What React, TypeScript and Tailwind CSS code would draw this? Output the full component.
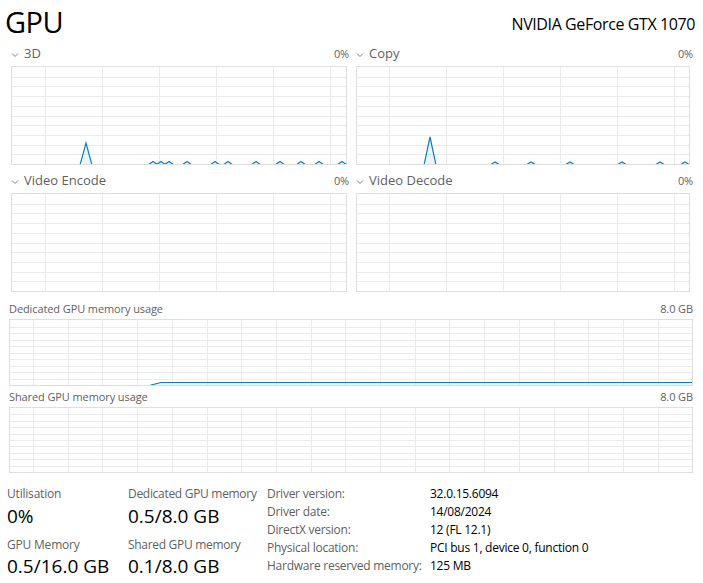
import React from "react";

const LINE = "#117dbb";
const GRID = "#ebebeb";

type Pt = [number, number];

function bumps(xs: number[], base: number, h = 2.5): Pt[] {
  const pts: Pt[] = [];
  xs.forEach((x) => {
    pts.push([x - 5, base], [x, base - h], [x + 5, base]);
  });
  return pts;
}

function Chart({
  w,
  h,
  cols,
  colStart,
  colStep,
  rows,
  series,
}: {
  w: number;
  h: number;
  cols: number;
  colStart: number;
  colStep: number;
  rows: number;
  series?: Pt[];
}) {
  const vx: number[] = [];
  for (let i = 0; i < cols; i++) vx.push(Math.round(colStart + i * colStep) + 0.5);
  const hy: number[] = [];
  for (let i = 1; i < rows; i++) hy.push(Math.round((i * h) / rows) + 0.5);
  const path = series ? series.map((p) => p.join(",")).join(" ") : "";
  return (
    <div className="border border-[#dedede] bg-white" style={{ width: w + 2, height: h + 2 }}>
      <svg width={w} height={h} className="block">
        {vx.map((x) => (
          <line key={"v" + x} x1={x} x2={x} y1={0} y2={h} stroke={GRID} strokeWidth={1} />
        ))}
        {hy.map((y) => (
          <line key={"h" + y} x1={0} x2={w} y1={y} y2={y} stroke={GRID} strokeWidth={1} />
        ))}
        {series && (
          <>
            <polygon
              points={`${series[0][0]},${h + 2} ${path} ${series[series.length - 1][0]},${h + 2}`}
              fill={LINE}
              fillOpacity={0.08}
            />
            <polyline points={path} fill="none" stroke={LINE} strokeWidth={1.2} />
          </>
        )}
      </svg>
    </div>
  );
}

function Chevron() {
  return (
    <svg width="8" height="6" viewBox="0 0 8 6" className="mr-[5px] mt-[1px]">
      <path d="M1 1.5 L4 4.5 L7 1.5" fill="none" stroke="#808080" strokeWidth="1" />
    </svg>
  );
}

function EngineHeader({ label }: { label: string }) {
  return (
    <div className="flex items-center justify-between h-[26px] pt-[2px] text-[13px] text-[#5f5f5f]">
      <div className="flex items-center">
        <Chevron />
        <span>{label}</span>
      </div>
      <span className="text-[11px] mr-[-2px] tracking-[-0.2px]">0%</span>
    </div>
  );
}

// baseline sits just below the visible area so only the peaks show
const B = 98;

const sp3d: Pt[] = [
  [0, B],
  [68, B],
  [74, 76],
  [80, B],
  ...bumps([141, 149, 157, 175, 203, 216, 244, 268, 289, 307, 330], B, 3.5),
  [335, B],
];

const spCopy: Pt[] = [
  [0, B],
  [67, B],
  [73, 70],
  [79, B],
  ...bumps([138, 174, 213, 265, 303, 328], B, 3),
  [333, B],
];

const spDed: Pt[] = [
  [138, 67],
  [141, 65],
  [151, 62.5],
  [683, 62.5],
];

const details = [
  ["Driver version:", "32.0.15.6094"],
  ["Driver date:", "14/08/2024"],
  ["DirectX version:", "12 (FL 12.1)"],
  ["Physical location:", "PCI bus 1, device 0, function 0"],
  ["Hardware reserved memory:", "125 MB"],
];

export default function App() {
  return (
    <div
      className="w-[703px] h-[583px] bg-white overflow-hidden text-black"
      style={{ fontFamily: '"Open Sans", "Noto Sans", sans-serif' }}
    >
      {/* header */}
      <div className="flex items-end justify-between pl-[5px] pr-[8px] h-[40px]">
        <div className="text-[29px] leading-[36px] tracking-[-0.5px]">GPU</div>
        <div className="text-[16px] leading-[20px] pb-[6px] tracking-[-0.4px]">NVIDIA GeForce GTX 1070</div>
      </div>

      {/* engines */}
      <div className="grid grid-cols-[336px_335px] gap-x-[9px] pl-[11px]">
        <div>
          <EngineHeader label="3D" />
          <Chart w={334} h={97} cols={6} colStart={33} colStep={57} rows={10} series={sp3d} />
        </div>
        <div>
          <EngineHeader label="Copy" />
          <Chart w={332} h={97} cols={6} colStart={32} colStep={57} rows={10} series={spCopy} />
        </div>
        <div className="mt-[2px]">
          <EngineHeader label="Video Encode" />
          <Chart w={334} h={97} cols={6} colStart={33} colStep={57} rows={10} />
        </div>
        <div className="mt-[2px]">
          <EngineHeader label="Video Decode" />
          <Chart w={332} h={97} cols={6} colStart={32} colStep={57} rows={10} />
        </div>
      </div>

      {/* memory */}
      <div className="pl-[9px] pr-[10px] mt-[7px]">
        <div className="flex items-center justify-between h-[20px] pt-[1px] text-[11px] text-[#5f5f5f] tracking-[-0.1px]">
          <span>Dedicated GPU memory usage</span>
          <span>8.0 GB</span>
        </div>
        <Chart w={682} h={65} cols={20} colStart={23} colStep={34.7} rows={10} series={spDed} />
        <div className="flex items-center justify-between h-[21px] pt-[1px] text-[11px] text-[#5f5f5f] tracking-[-0.1px]">
          <span>Shared GPU memory usage</span>
          <span>8.0 GB</span>
        </div>
        <Chart w={682} h={64} cols={20} colStart={23} colStep={34.7} rows={10} />
      </div>

      {/* stats */}
      <div className="flex items-start pl-[7px] mt-[13px]">
        <div className="w-[121px] flex flex-col">
          <div className="text-[12px] leading-[16px] text-[#5f5f5f] tracking-[-0.2px]">Utilisation</div>
          <div className="text-[19px] leading-[26px] mt-[1px]">0%</div>
          <div className="text-[12px] leading-[16px] text-[#5f5f5f] mt-[8px] tracking-[-0.2px]">GPU Memory</div>
          <div className="text-[19px] leading-[26px]">0.5/16.0 GB</div>
        </div>
        <div className="w-[139px] flex flex-col">
          <div className="text-[12px] leading-[16px] text-[#5f5f5f] tracking-[-0.3px]">Dedicated GPU memory</div>
          <div className="text-[19px] leading-[26px] mt-[1px]">0.5/8.0 GB</div>
          <div className="text-[12px] leading-[16px] text-[#5f5f5f] mt-[8px] tracking-[-0.3px]">Shared GPU memory</div>
          <div className="text-[19px] leading-[26px]">0.1/8.0 GB</div>
        </div>
        <div className="grid grid-cols-[163px_auto] auto-rows-[18px] text-[12px] leading-[18px] mt-[-1px] tracking-[-0.25px]">
          {details.map(([k, v]) => (
            <React.Fragment key={k}>
              <div className="text-[#5f5f5f]">{k}</div>
              <div>{v}</div>
            </React.Fragment>
          ))}
        </div>
      </div>
    </div>
  );
}
